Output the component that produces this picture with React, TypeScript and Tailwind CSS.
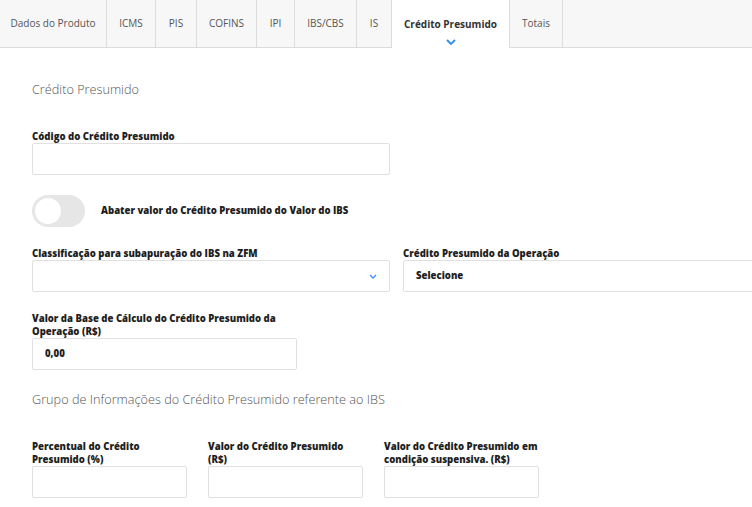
import React from "react";

const tabs = [
  { label: "Dados do Produto", w: "w-[107px]" },
  { label: "ICMS", w: "w-[49px]" },
  { label: "PIS", w: "w-[41px]" },
  { label: "COFINS", w: "w-[60px]" },
  { label: "IPI", w: "w-[38px]" },
  { label: "IBS/CBS", w: "w-[62px]" },
  { label: "IS", w: "w-[35px]" },
  { label: "Crédito Presumido", w: "w-[118px]", active: true },
  { label: "Totais", w: "w-[53px]" },
];

function Label({ children, className = "" }: { children: React.ReactNode; className?: string }) {
  return (
    <div className={"text-[9.6px] font-extrabold leading-[13px] text-[#1e1e1e] " + className}>{children}</div>
  );
}

function Input({ className = "", children }: { className?: string; children?: React.ReactNode }) {
  return (
    <div
      className={
        "h-[32px] border border-[#e0e0e0] rounded-[2px] bg-white flex items-center px-[12px] text-[9.6px] font-extrabold text-[#1e1e1e] " +
        className
      }
    >
      {children}
    </div>
  );
}

export default function App() {
  return (
    <div
      className="w-[752px] h-[507px] overflow-hidden bg-white"
      style={{ fontFamily: '"Open Sans", "Noto Sans", sans-serif' }}
    >
      <div className="flex h-[48px] bg-[#f7f7f7] border-b border-[#dcdcdc]">
        {tabs.map((t) => (
          <div
            key={t.label}
            className={
              "relative flex items-center justify-center border-r border-[#dcdcdc] text-[10px] " +
              t.w +
              (t.active ? " bg-white font-bold text-[#333] -mb-px" : " text-[#555]")
            }
          >
            {t.label}
            {t.active && (
              <svg
                className="absolute left-1/2 -translate-x-1/2 top-[39px]"
                width="10"
                height="6"
                viewBox="0 0 10 6"
              >
                <path d="M1 1l4 4 4-4" fill="none" stroke="#2a8df0" strokeWidth="1.8" />
              </svg>
            )}
          </div>
        ))}
      </div>

      <div className="pl-[32px] w-[800px]">
        <div className="mt-[33px] text-[12.7px] text-[#555] font-light leading-[16px]">Crédito Presumido</div>

        <div className="mt-[33px] w-[358px]">
          <Label>Código do Crédito Presumido</Label>
          <Input />
        </div>

        <div className="mt-[20px] flex items-center gap-[16px]">
          <div className="w-[53px] h-[32px] rounded-full bg-[#e6e6e6] flex items-center px-[3px]">
            <div className="w-[26px] h-[26px] rounded-full bg-white" />
          </div>
          <div className="text-[9.6px] font-extrabold text-[#1e1e1e]">
            Abater valor do Crédito Presumido do Valor do IBS
          </div>
        </div>

        <div className="mt-[20px] flex gap-[13px]">
          <div className="w-[358px]">
            <Label>Classificação para subapuração do IBS na ZFM</Label>
            <Input className="justify-end px-[5px]">
              <svg width="8" height="5" viewBox="0 0 8 5">
                <path d="M1 1l3 3 3-3" fill="none" stroke="#3d95ef" strokeWidth="1.4" />
              </svg>
            </Input>
          </div>
          <div className="w-[358px]">
            <Label>Crédito Presumido da Operação</Label>
            <Input className="px-[9px]">Selecione</Input>
          </div>
        </div>

        <div className="mt-[20px] w-[265px]">
          <Label>Valor da Base de Cálculo do Crédito Presumido da Operação (R$)</Label>
          <Input>0,00</Input>
        </div>

        <div className="mt-[21px] text-[12.7px] text-[#555] font-light leading-[16px]">
          Grupo de Informações do Crédito Presumido referente ao IBS
        </div>

        <div className="mt-[33px] flex gap-[21px]">
          <div className="w-[155px]">
            <Label className="w-[130px]">Percentual do Crédito Presumido (%)</Label>
            <Input />
          </div>
          <div className="w-[155px]">
            <Label>Valor do Crédito Presumido (R$)</Label>
            <Input />
          </div>
          <div className="w-[155px]">
            <Label className="w-[165px]">Valor do Crédito Presumido em condição suspensiva. (R$)</Label>
            <Input />
          </div>
        </div>
      </div>
    </div>
  );
}
